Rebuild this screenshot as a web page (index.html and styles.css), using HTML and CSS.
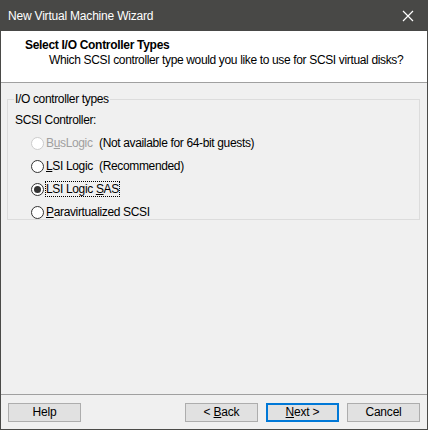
FILE: index.html
```html
<!DOCTYPE html>
<html>
<head>
<meta charset="utf-8">
<link rel="stylesheet" href="styles.css">
</head>
<body>
<div class="window">
  <div class="titlebar">
    <span class="title">New Virtual Machine Wizard</span>
    <svg class="close" width="12" height="12" viewBox="0 0 12 12"><path d="M1 1 L11 11 M11 1 L1 11" stroke="#fff" stroke-width="1.2" fill="none"/></svg>
  </div>
  <div class="header">
    <div class="h-title">Select I/O Controller Types</div>
    <div class="h-sub">Which SCSI controller type would you like to use for SCSI virtual disks?</div>
  </div>
  <div class="body">
    <fieldset class="group">
      <legend>I/O controller types</legend>
      <div class="label">SCSI Controller:</div>
      <div class="options">
        <div class="opt disabled"><span class="radio"></span><span class="name">B<u>u</u>sLogic</span><span class="note">(Not available for 64-bit guests)</span></div>
        <div class="opt"><span class="radio"></span><span class="name"><u>L</u>SI Logic</span><span class="note">(Recommended)</span></div>
        <div class="opt"><span class="radio checked"></span><span class="name focus">LSI Logic <u>S</u>AS</span></div>
        <div class="opt"><span class="radio"></span><span class="name"><u>P</u>aravirtualized SCSI</span></div>
      </div>
    </fieldset>
  </div>
  <div class="footer">
    <button class="btn">Help</button>
    <div class="spacer"></div>
    <button class="btn">&lt; <u>B</u>ack</button>
    <button class="btn default"><u>N</u>ext &gt;</button>
    <button class="btn">Cancel</button>
  </div>
</div>
</body>
</html>
```
FILE: styles.css
```css
* { box-sizing: border-box; }
html, body { margin: 0; padding: 0; }
body {
  font-family: "Liberation Sans", Arial, sans-serif;
  font-size: 12px;
  letter-spacing: -0.35px;
  color: #000;
  background: #f0f0f0;
}
.window {
  width: 428px;
  height: 430px;
  border: 1px solid #4a4a48;
  border-top: none;
  display: flex;
  flex-direction: column;
  background: #f0f0f0;
}
.titlebar {
  height: 31px;
  background: #484846;
  display: flex;
  align-items: center;
  padding: 0 14px 0 8px;
  margin: 0 -1px;
}
.title { color: #fff; flex: 1; font-size: 12px; letter-spacing: -0.2px; }
.close { display: block; }
.header {
  background: #fff;
  height: 52px;
  border-bottom: 1px solid #a0a0a0;
  padding: 7px 0 0 24px;
}
.h-title { font-weight: bold; line-height: 15px; white-space: nowrap; letter-spacing: -0.3px; }
.h-sub { padding-left: 24px; line-height: 15px; color: #000; white-space: nowrap; }
.body {
  flex: 1;
  padding: 9px 7px 0 6px;
}
.group {
  margin: 0;
  border: 1px solid #dcdcdc;
  padding: 1px 8px 8px 7px;
  height: 128px;
}
.group legend { padding: 0 1px; margin-left: -1px; line-height: 14px; }
.label { margin-top: 6px; line-height: 15px; }
.options { padding: 7px 0 0 16px; display: flex; flex-direction: column; gap: 7px; }
.opt { display: flex; align-items: center; height: 16px; }
.radio {
  width: 13px; height: 13px; border-radius: 50%;
  border: 1px solid #333; background: #fff;
  margin-right: 2px; position: relative; flex: none;
}
.radio.checked::after {
  content: ""; position: absolute; left: 2px; top: 2px;
  width: 7px; height: 7px; border-radius: 50%; background: #333;
}
.disabled .radio { border-color: #cccccc; background: #fff; }
.disabled .name { color: #a0a0a0; }
.name { width: 53px; white-space: nowrap; flex: none; }
.name.focus { width: auto; outline: 1px dotted #000; outline-offset: 0; }
.note { white-space: nowrap; }
.footer {
  height: 35px;
  border-top: 1px solid #a0a0a0;
  display: flex;
  align-items: center;
  padding: 0 7px 0 7px;
  gap: 8px;
}
.spacer { flex: 1; }
.btn {
  width: 73px; height: 19px;
  font: inherit; font-size: 12px; color: #000;
  letter-spacing: -0.2px;
  background: #e1e1e1;
  border: 1px solid #adadad;
  padding: 0;
  line-height: 15px;
}
.btn.default { border: 2px solid #0078d7; }
```
